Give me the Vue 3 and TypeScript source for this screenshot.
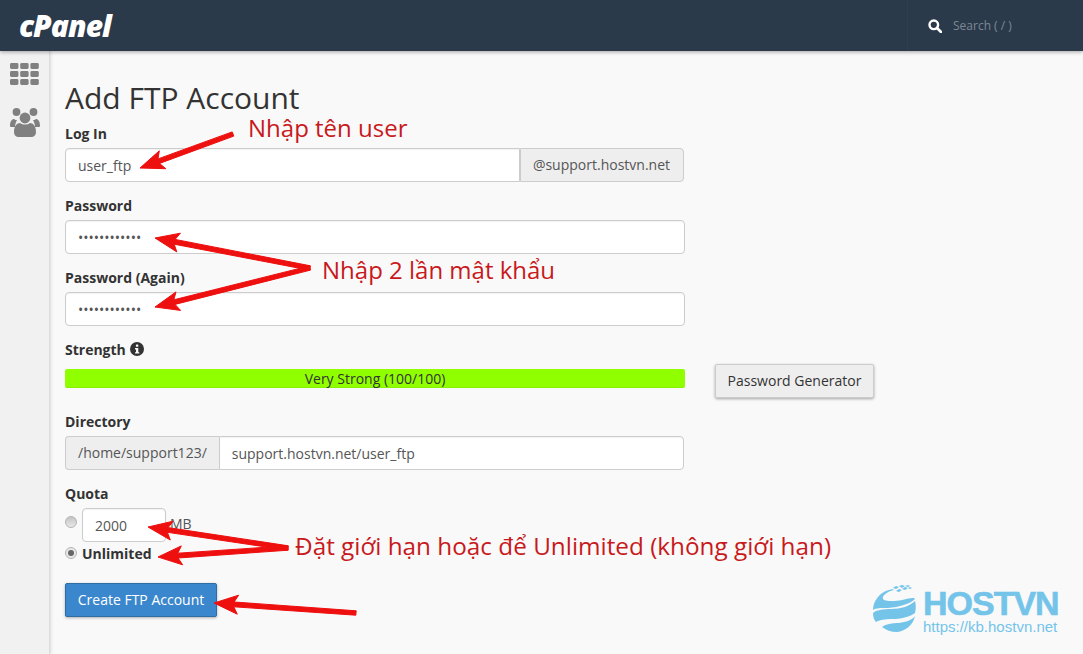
<script setup lang="ts">
type Pt = [number, number]
function arrow(from: Pt, to: Pt) {
  const dx = to[0] - from[0]
  const dy = to[1] - from[1]
  const len = Math.hypot(dx, dy)
  const ux = dx / len
  const uy = dy / len
  const nx = -uy
  const ny = ux
  const at = (d: number, w: number) =>
    `${(to[0] - ux * d + nx * w).toFixed(1)},${(to[1] - uy * d + ny * w).toFixed(1)}`
  const startA = `${(from[0] + nx * 2.2).toFixed(1)},${(from[1] + ny * 2.2).toFixed(1)}`
  const startB = `${(from[0] - nx * 2.2).toFixed(1)},${(from[1] - ny * 2.2).toFixed(1)}`
  return [startA, at(20, 2.4), at(24, 9.5), `${to[0]},${to[1]}`, at(24, -9.5), at(20, -2.4), startB].join(' ')
}
const arrows = [
  arrow([233, 134], [140, 168]),
  arrow([310, 268], [155, 238]),
  arrow([310, 268], [155, 307]),
  arrow([288, 548], [148, 527]),
  arrow([288, 548], [158, 557]),
  arrow([356, 613], [214, 603]),
]
const dots = Array.from({ length: 9 }, (_, i) => ({
  x: 10 + (i % 3) * 10.2,
  y: 63 + Math.floor(i / 3) * 8,
}))
</script>

<template>
  <div class="page">
    <header class="topbar">
      <span class="brand">cPanel</span>
      <div class="search">
        <svg class="search-icon" viewBox="0 0 14 14" width="14" height="14">
          <circle cx="5.8" cy="5.8" r="4.3" fill="none" stroke="#fff" stroke-width="2.4" />
          <path d="M9 9l4 4" stroke="#fff" stroke-width="2.6" stroke-linecap="round" />
        </svg>
        <span class="search-text">Search ( / )</span>
      </div>
    </header>
    <div class="body">
      <aside class="side">
        <svg class="side-svg" width="50" height="90" viewBox="0 51 50 90">
          <rect v-for="(d, i) in dots" :key="i" :x="d.x" :y="d.y" width="8.4" height="6" rx="1.4" fill="#808080" />
          <circle cx="16.5" cy="112" r="3.9" fill="#808080" />
          <circle cx="33.5" cy="112" r="3.9" fill="#808080" />
          <circle cx="25" cy="118" r="5.4" fill="#808080" />
          <path d="M10 126c0-5 2-7 4-7 1 1 2 1 3 1-1 2-2 4-2 7h-3c-1 0-2 0-2-1zM40 126c0-5-2-7-4-7-1 1-2 1-3 1 1 2 2 4 2 7h3c1 0 2 0 2-1z" fill="#808080" />
          <path d="M14 132c0-6 3-9 6-9 3 2 7 2 10 0 3 0 6 3 6 9 0 3-2 5-5 5H19c-3 0-5-2-5-5z" fill="#808080" />
        </svg>
      </aside>
      <main class="content">
        <h1>Add FTP Account</h1>
        <div class="group login">
          <label>Log In</label>
          <div class="joined">
            <input class="field grow left" value="user_ftp" readonly />
            <span class="addon right">@support.hostvn.net</span>
          </div>
        </div>
        <div class="group">
          <label>Password</label>
          <input class="field full" type="password" value="abcdefghijkl" readonly />
        </div>
        <div class="group">
          <label>Password (Again)</label>
          <input class="field full" type="password" value="abcdefghijkl" readonly />
        </div>
        <div class="group">
          <label>Strength
            <svg class="info" viewBox="0 0 14 14" width="14" height="14">
              <circle cx="7" cy="7" r="7" fill="#333" />
              <rect x="5.9" y="2.4" width="2.4" height="2.4" rx=".6" fill="#f9f9f9" />
              <path d="M5 6h3.3v4.2h1v1.4H5v-1.4h1V7.4H5z" fill="#f9f9f9" />
            </svg>
          </label>
          <div class="strength-row">
            <div class="bar">Very Strong (100/100)</div>
            <button class="gen">Password Generator</button>
          </div>
        </div>
        <div class="group">
          <label>Directory</label>
          <div class="joined">
            <span class="addon left">/home/support123/</span>
            <input class="field grow right" value="support.hostvn.net/user_ftp" readonly />
          </div>
        </div>
        <div class="quota">
          <label>Quota</label>
          <div class="q-row">
            <span class="radio"></span>
            <input class="field qty" value="2000" readonly />
            <span class="mb">MB</span>
          </div>
          <div class="q-row unlimited">
            <span class="radio on"></span>
            <b>Unlimited</b>
          </div>
        </div>
        <button class="create">Create FTP Account</button>
      </main>
    </div>

    <svg class="arrows" width="1083" height="654" viewBox="0 0 1083 654">
      <polygon v-for="(p, i) in arrows" :key="i" :points="p" fill="#ee0f0f" stroke="#ee0f0f" stroke-width="1" stroke-linejoin="round" />
      <g fill="#74c4ea">
        <path d="M873 610c0-9 7-18 16-20 3-1 4-1 5 0-8 2-12 6-11 9 1 2 10 3 19 1 8-2 12-3 13-1-5 5-16 8-27 9-7 0-12 0-15 2z" />
        <path d="M873 613c3-3 10-4 18-4 10 0 19-3 24-8 1 3 1 8 0 12-6 4-14 6-23 6-7 0-13 1-16 3-2-2-3-5-3-9z" />
        <path d="M882 627c4-3 10-4 17-4 7-1 13-3 16-7-2 9-9 15-18 16-6 0-11-2-15-5z" />
        <path d="M893 588l3-2 3 1-3 2zM899 586l3-1 3 1-3 2zM905 586l3-1 2 1-2 1zM896 591l3-2 3 1-3 2zM902 589l3-2 3 1-3 2zM908 588l2-1 2 1-2 1z" />
      </g>
    </svg>
    <span class="note n1">Nhập tên user</span>
    <span class="note n2">Nhập 2 lần mật khẩu</span>
    <span class="note n3">Đặt giới hạn hoặc để Unlimited (không giới hạn)</span>
    <span class="wm">HOSTVN</span>
    <span class="wm-url">https://kb.hostvn.net</span>
  </div>
</template>

<style>
html, body { margin: 0; background: #f9f9f9; }
</style>

<style scoped>
.page {
  position: relative;
  width: 1083px;
  height: 654px;
  overflow: hidden;
  background: #f9f9f9;
  font-family: "Open Sans", sans-serif;
  font-size: 14px;
  color: #333;
}
.topbar {
  height: 51px;
  background: #2b3a4a;
  display: flex;
  align-items: center;
  justify-content: space-between;
  box-shadow: 0 1px 4px rgba(0, 0, 0, .35);
  position: relative;
  z-index: 2;
}
.brand {
  margin-left: 19px;
  font: italic 800 30px/51px "Open Sans", sans-serif;
  letter-spacing: -1px;
  color: #fff;
}
.search {
  width: 155px;
  height: 51px;
  border-left: 1px solid #2f3f50;
  display: flex;
  align-items: center;
  gap: 11px;
  padding-left: 20px;
  box-sizing: content-box;
}
.search-icon { flex: none; }
.search-text { font-size: 12px; color: #7b8894; }
.body { display: flex; height: 603px; }
.side {
  width: 49px;
  flex: none;
  background: #f1f1f1;
  border-right: 1px solid #dcdcdc;
  box-shadow: 1px 0 3px rgba(0, 0, 0, .12);
}
.side-svg { display: block; }
.content { padding-left: 15px; width: 620px; }
h1 {
  margin: 0;
  height: 73px;
  box-sizing: border-box;
  padding-top: 27px;
  font-size: 30px;
  line-height: 40px;
  font-weight: 400;
  color: #333;
}
label {
  display: block;
  font-weight: 700;
  line-height: 20px;
  height: 20px;
  margin-bottom: 4px;
}
.group { height: 72px; }
.info { vertical-align: -1px; margin-left: 1px; }
.field {
  display: block;
  box-sizing: border-box;
  height: 34px;
  padding: 6px 12px;
  border: 1px solid #ccc;
  border-radius: 4px;
  background: #fff;
  color: #555;
  font: 14px "Open Sans", sans-serif;
  outline: none;
  box-shadow: inset 0 1px 1px rgba(0, 0, 0, .05);
}
.full { width: 620px; }
.joined { display: flex; width: 619px; }
.login .joined { margin-top: 1px; }
.grow { flex: 1; min-width: 0; }
.field.left { border-radius: 4px 0 0 4px; }
.field.right { border-radius: 0 4px 4px 0; }
.addon {
  box-sizing: border-box;
  height: 34px;
  line-height: 32px;
  padding: 0 12px;
  border: 1px solid #ccc;
  background: #eee;
  color: #555;
}
.addon.right { border-radius: 0 4px 4px 0; padding-right: 13px; }
.addon.left { border-radius: 4px 0 0 4px; border-right: 0; }
.strength-row { display: flex; align-items: flex-start; margin-top: 9px; }
.bar {
  width: 620px;
  height: 19px;
  flex: none;
  box-sizing: border-box;
  background: #90ff00;
  border-radius: 2px;
  text-align: center;
  line-height: 20px;
  font-size: 14px;
  color: #333;
  box-shadow: inset 0 -1px 0 rgba(0, 0, 0, .06);
}
.gen {
  flex: none;
  margin: -5px 0 0 30px;
  width: 159px;
  height: 34px;
  border: 1px solid #ccc;
  border-radius: 2px;
  background: #eee;
  color: #333;
  font: 14px "Open Sans", sans-serif;
  padding: 0 0 2px;
  box-shadow: 0 1px 3px rgba(0, 0, 0, .35);
}
.quota { height: 99px; }
.q-row { display: flex; align-items: center; height: 34px; }
.unlimited { height: 22px; }
.radio {
  width: 12px;
  height: 12px;
  box-sizing: border-box;
  border-radius: 50%;
  border: 1px solid #b4b4b4;
  background: linear-gradient(#c4c4c4, #e8e8e8);
  margin-right: 5px;
  flex: none;
  position: relative;
}
.q-row .radio { margin-top: -7px; }
.unlimited .radio { margin-top: -1px; background: #e8e8e8; }
.radio.on::after {
  content: "";
  position: absolute;
  inset: 2px;
  border-radius: 50%;
  background: #666;
}
.qty { width: 84px; }
.mb { margin-left: 4px; margin-top: -4px; color: #555; }
.unlimited b { font-weight: 700; }
.create {
  display: block;
  width: 152px;
  height: 34px;
  padding: 0 0 2px;
  border: 1px solid #2e6da4;
  border-radius: 2px;
  background: #3a87cd;
  color: #fff;
  font: 14px "Open Sans", sans-serif;
  box-shadow: 0 1px 3px rgba(0, 0, 0, .3);
}
.arrows { position: absolute; left: 0; top: 0; pointer-events: none; }
.note {
  position: absolute;
  font-size: 24px;
  line-height: 30px;
  color: #c8191c;
  white-space: nowrap;
}
.n1 { left: 248px; top: 113px; }
.n2 { left: 322px; top: 255px; }
.n3 { left: 295px; top: 531px; font-size: 24.3px; }
.wm {
  position: absolute;
  left: 923px;
  top: 588px;
  font: 700 34px/30px "Liberation Sans", sans-serif;
  letter-spacing: -1px;
  -webkit-text-stroke: .6px #74c4ea;
  color: #74c4ea;
}
.wm-url {
  position: absolute;
  left: 923px;
  top: 618px;
  font: 15px/18px "Liberation Sans", sans-serif;
  color: #74c4ea;
}
</style>
